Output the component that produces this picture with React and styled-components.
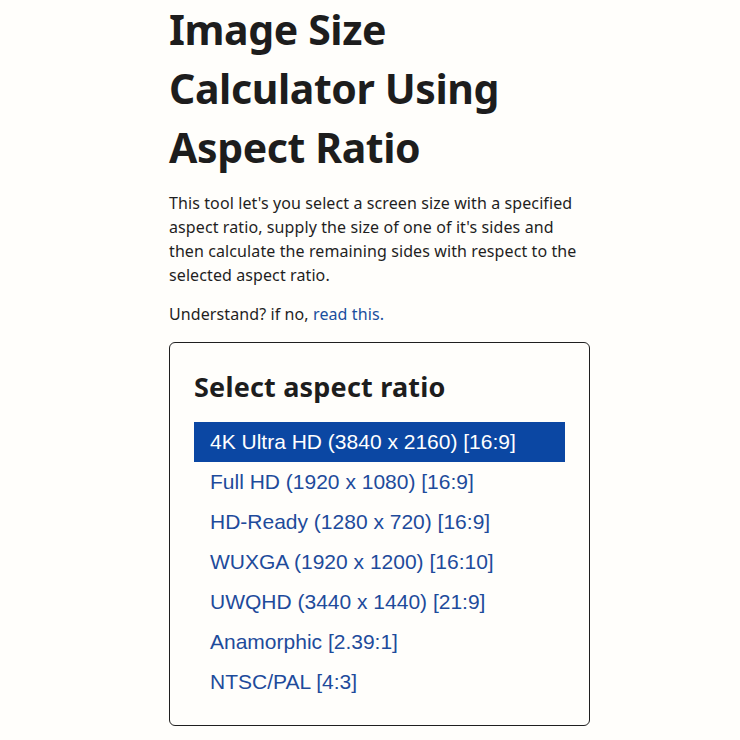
import React, { useState } from "react";
import styled, { createGlobalStyle } from "styled-components";

const GlobalStyle = createGlobalStyle`
  html, body {
    margin: 0;
    padding: 0;
    background: #fffefb;
  }
  body {
    font-family: "Noto Sans", "Open Sans", sans-serif;
    color: #1f1f1f;
  }
`;

const Page = styled.main`
  width: 421px;
  padding-left: 169px;
`;

const Title = styled.h1`
  margin: 0;
  font-size: 41px;
  line-height: 59px;
  font-weight: 700;
  color: #1d1d1d;
  letter-spacing: -0.4px;
`;

const Intro = styled.p`
  margin: 14px 0 15px;
  font-size: 16px;
  line-height: 24px;
  letter-spacing: 0.1px;
`;

const Link = styled.a`
  color: #1a4f9e;
  text-decoration: none;
`;

const Card = styled.section`
  margin-top: 16px;
  border: 1px solid #1f1f1f;
  border-radius: 6px;
  padding: 22px 24px 23px;
`;

const CardTitle = styled.h2`
  margin: 0 0 13px;
  font-size: 27px;
  line-height: 44px;
  font-weight: 700;
  letter-spacing: 0.2px;
  color: #1d1d1d;
`;

const List = styled.ul`
  list-style: none;
  margin: 0;
  padding: 0;
  font-family: "Liberation Sans", Arial, sans-serif;
  font-size: 21px;
`;

const Option = styled.li`
  height: 40px;
  line-height: 40px;
  padding-left: 16px;
  cursor: pointer;
  color: ${(p) => (p.$active ? "#ffffff" : "#1e4b9b")};
  background: ${(p) => (p.$active ? "#0b47a3" : "transparent")};
`;

const ratios = [
  "4K Ultra HD (3840 x 2160) [16:9]",
  "Full HD (1920 x 1080) [16:9]",
  "HD-Ready (1280 x 720) [16:9]",
  "WUXGA (1920 x 1200) [16:10]",
  "UWQHD (3440 x 1440) [21:9]",
  "Anamorphic [2.39:1]",
  "NTSC/PAL [4:3]",
];

export default function App() {
  const [selected, setSelected] = useState(0);

  return (
    <>
      <GlobalStyle />
      <Page>
        <Title>Image Size Calculator Using Aspect Ratio</Title>
        <Intro>
          This tool let's you select a screen size with a specified aspect
          ratio, supply the size of one of it's sides and then calculate the
          remaining sides with respect to the selected aspect ratio.
        </Intro>
        <Intro>
          Understand? if no, <Link href="#">read this.</Link>
        </Intro>
        <Card>
          <CardTitle>Select aspect ratio</CardTitle>
          <List role="listbox">
            {ratios.map((r, i) => (
              <Option
                key={r}
                role="option"
                aria-selected={i === selected}
                $active={i === selected}
                onClick={() => setSelected(i)}
              >
                {r}
              </Option>
            ))}
          </List>
        </Card>
      </Page>
    </>
  );
}
